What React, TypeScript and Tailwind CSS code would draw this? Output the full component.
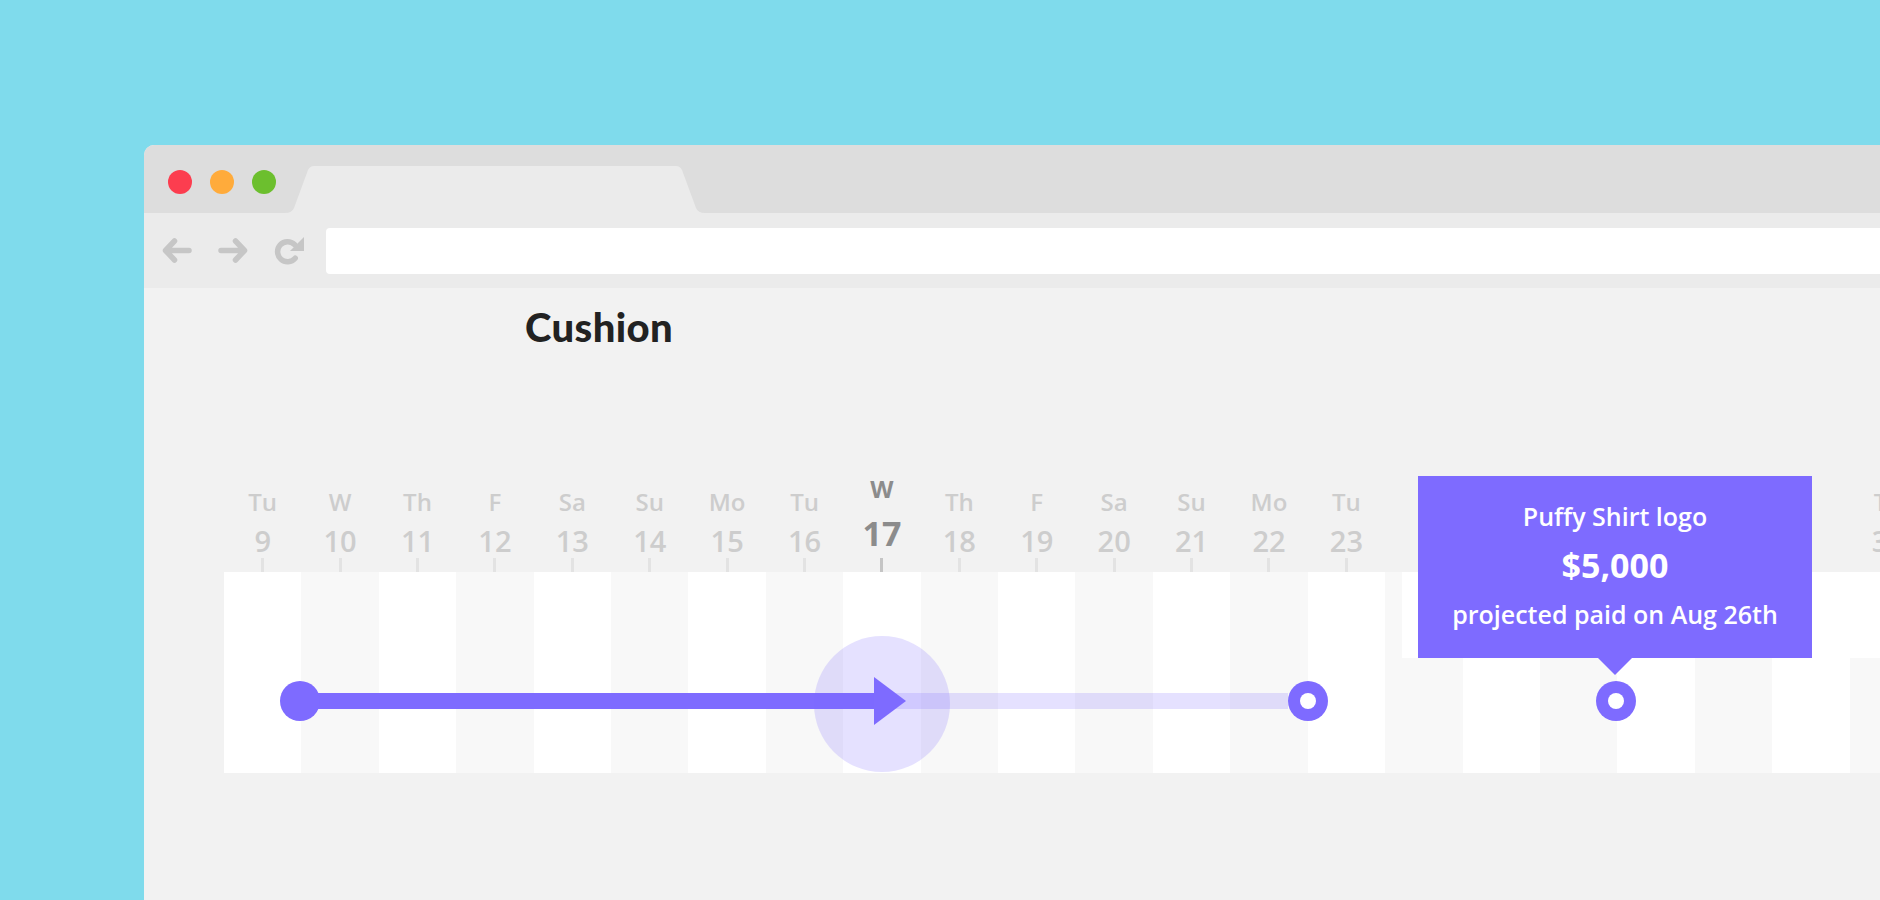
import React from 'react'

const WEEK = ['Tu', 'W', 'Th', 'F', 'Sa', 'Su', 'Mo']

const columns = Array.from({ length: 22 }, (_, i) => ({
  name: WEEK[i % 7],
  num: 9 + i,
  today: i === 8,
  // labels under the tooltip are not shown
  hidden: i >= 15 && i <= 20,
}))

function BackIcon() {
  return (
    <svg width="30" height="25" viewBox="0 0 30 25" fill="none" stroke="#c6c6c6" strokeWidth={5.5} strokeLinecap="round" strokeLinejoin="round">
      <path d="M27 12.5H4M12.5 3L3.5 12.5L12.5 22" />
    </svg>
  )
}

function ForwardIcon() {
  return (
    <svg width="30" height="25" viewBox="0 0 30 25" fill="none" stroke="#c6c6c6" strokeWidth={5.5} strokeLinecap="round" strokeLinejoin="round">
      <path d="M3 12.5H26M17.5 3L26.5 12.5L17.5 22" />
    </svg>
  )
}

function ReloadIcon() {
  return (
    <svg width="32" height="30" viewBox="0 0 32 30">
      <path d="M22.2 21.2A10 10 0 1 1 21.5 7.5" fill="none" stroke="#c6c6c6" strokeWidth={5.5} strokeLinecap="round" />
      <path d="M31 0V14H17Z" fill="#c6c6c6" />
    </svg>
  )
}

function Dot({ left, ring }: { left: number; ring?: boolean }) {
  return (
    <div
      className="absolute top-[109px] w-10 h-10 rounded-full bg-[#7e6bff] flex items-center justify-center"
      style={{ left }}
    >
      {ring && <div className="w-4 h-4 rounded-full bg-white" />}
    </div>
  )
}

export default function App() {
  return (
    <div className="w-[1880px] h-[900px] overflow-hidden bg-[#7fdbec] pl-[144px] pt-[145px]">
      <div className="h-full bg-[#f2f2f2] rounded-tl-[10px] overflow-hidden flex flex-col">
        {/* tab strip */}
        <div className="relative h-[68px] bg-[#dddddd] shrink-0">
          <svg className="absolute left-0 top-0" width="580" height="68" viewBox="0 0 580 68">
            <path d="M141 68Q148 68 150 63L164 25Q166 21 170 21L532 21Q536 21 538 25L552 63Q554 68 561 68Z" fill="#ebebeb" />
          </svg>
          <div className="relative flex gap-[18px] pl-[24px] pt-[25px]">
            <div className="w-6 h-6 rounded-full bg-[#fc3d4f]" />
            <div className="w-6 h-6 rounded-full bg-[#ffab3b]" />
            <div className="w-6 h-6 rounded-full bg-[#6cbf2e]" />
          </div>
        </div>

        {/* toolbar */}
        <div className="h-[75px] bg-[#ebebeb] shrink-0 flex items-start pl-[18px]">
          <div className="mt-[25px]"><BackIcon /></div>
          <div className="mt-[25px] ml-[26px]"><ForwardIcon /></div>
          <div className="mt-[24px] ml-[25px]"><ReloadIcon /></div>
          <div className="mt-[15px] ml-[21px] h-[46px] flex-1 bg-white rounded-l-[4px]" />
        </div>

        {/* page */}
        <div className="flex-1 font-['Open_Sans',sans-serif]">
          <div className="h-[59px] pl-[381px] pt-[19px]">
            <h1 className="font-['Lato',sans-serif] font-black text-[40px] tracking-[0.4px] leading-none text-[#222222]">Cushion</h1>
          </div>

          <div className="ml-[80px]">
            <div className="h-[225px] flex items-end">
              {columns.map((c) => (
                <div key={c.num} className="w-[77.42px] shrink-0 flex flex-col items-center">
                  {c.hidden ? null : c.today ? (
                    <>
                      <div className="text-[24px] leading-none font-bold text-[#8c8c8c] mb-[15px]">{c.name}</div>
                      <div className="text-[34px] leading-none font-bold text-[#8c8c8c] mb-[8px]">{c.num}</div>
                      <div className="w-[3px] h-[14px] bg-[#c5c5c5]" />
                    </>
                  ) : (
                    <>
                      <div className="text-[24px] leading-none font-semibold text-[#cdcdcd] mb-[12px]">{c.name}</div>
                      <div className="text-[29px] leading-none font-semibold text-[#cdcdcd] mb-[3px]">{c.num}</div>
                      <div className="w-[3px] h-[14px] bg-[#e3e3e3]" />
                    </>
                  )}
                </div>
              ))}
            </div>

            <div className="relative h-[201px] flex">
              {columns.map((c, i) => (
                <div key={c.num} className={`w-[77.42px] shrink-0 ${i % 2 === 0 ? 'bg-white' : 'bg-[#f8f8f8]'}`} />
              ))}

              <div className="absolute left-[1178px] top-0 w-[634px] h-[86px] bg-white" />

              {/* done part */}
              <div className="absolute left-[76px] top-[121px] w-[574px] h-4 bg-[#7e6bff]" />
              <Dot left={56} />
              {/* projected part */}
              <div className="absolute left-[650px] top-[121px] w-[414px] h-4 bg-[#7e6bff]/20" />
              <div className="absolute left-[590px] top-[64px] w-[136px] h-[136px] rounded-full bg-[#7e6bff]/20" />
              <div className="absolute left-[650px] top-[105px] w-0 h-0 border-y-[24px] border-y-transparent border-l-[32px] border-l-[#7e6bff]" />
              <Dot left={1064} ring />
              <Dot left={1372} ring />

              {/* tooltip */}
              <div className="absolute left-[1194px] top-[-96px] w-[394px] h-[182px] bg-[#7e6bff] text-white flex flex-col items-center pt-[28px]">
                <div className="text-[25px] leading-none font-semibold">Puffy Shirt logo</div>
                <div className="text-[34px] leading-none font-bold mt-[19px]">$5,000</div>
                <div className="text-[25px] leading-none font-semibold mt-[20px]">projected paid on Aug 26th</div>
              </div>
              <div className="absolute left-[1374px] top-[86px] w-0 h-0 border-x-[17.5px] border-x-transparent border-t-[17px] border-t-[#7e6bff]" />
            </div>
          </div>
        </div>
      </div>
    </div>
  )
}
